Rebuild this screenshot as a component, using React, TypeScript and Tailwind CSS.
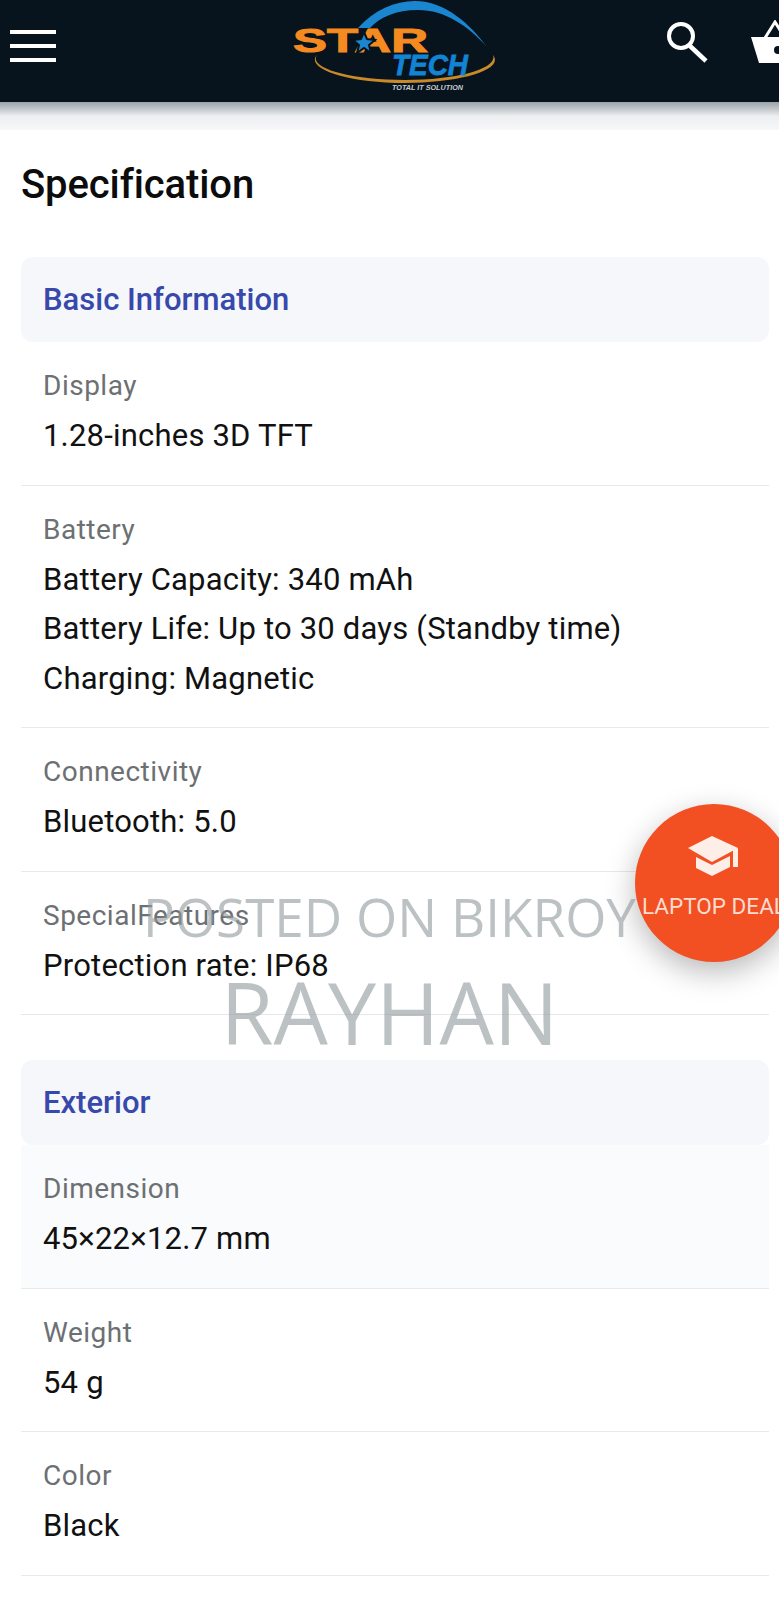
const sections = [
  {
    title: 'Basic Information',
    rows: [
      { label: 'Display', lines: ['1.28-inches 3D TFT'] },
      {
        label: 'Battery',
        lines: ['Battery Capacity: 340 mAh', 'Battery Life: Up to 30 days (Standby time)', 'Charging: Magnetic'],
      },
      { label: 'Connectivity', lines: ['Bluetooth: 5.0'] },
      { label: 'SpecialFeatures', lines: ['Protection rate: IP68'] },
    ],
  },
  {
    title: 'Exterior',
    rows: [
      { label: 'Dimension', lines: ['45×22×12.7 mm'], shaded: true },
      { label: 'Weight', lines: ['54 g'] },
      { label: 'Color', lines: ['Black'] },
    ],
  },
];

function Logo() {
  return (
    <svg width="210" height="102" viewBox="0 0 210 102" className="shrink-0">
      <path d="M68 28C84 10 105 1 125 1c30 0 55 23 72 46-19-21-42-37-69-37-22 0-38 7-48 18z" fill="#1a86d0" />
      <text
        x="3"
        y="52"
        fontFamily="Liberation Sans"
        fontSize="33"
        fontWeight="700"
        fill="#f48a20"
        stroke="#f48a20"
        strokeWidth="1"
        textLength="135"
        lengthAdjust="spacingAndGlyphs"
      >
        STAR
      </text>
      <polygon
        points="74,32 77,39 85,40 79,45 81,53 74,48 67,53 69,45 63,40 71,39"
        fill="#1a86d0"
        stroke="#07141e"
        strokeWidth="2"
      />
      <path d="M27 55C15 68 55 83 115 83c55 0 100-13 88-28 5 13-33 25-88 25C60 80 18 68 27 55z" fill="#c98a2a" />
      <text
        x="102"
        y="75"
        fontFamily="Liberation Sans"
        fontSize="30"
        fontWeight="700"
        fontStyle="italic"
        fill="#1284d4"
        stroke="#1284d4"
        strokeWidth="0.8"
        textLength="76"
        lengthAdjust="spacingAndGlyphs"
      >
        TECH
      </text>
      <text
        x="102"
        y="90"
        fontFamily="Liberation Sans"
        fontSize="7"
        fontWeight="700"
        fontStyle="italic"
        fill="#c8ccd0"
        textLength="71"
        lengthAdjust="spacingAndGlyphs"
      >
        TOTAL IT SOLUTION
      </text>
    </svg>
  );
}

function Header() {
  return (
    <header className="h-[102px] overflow-hidden bg-[#07141e]">
      <div className="flex h-full items-center pl-[10px]">
        <div className="flex w-[46px] shrink-0 flex-col gap-[10px] pb-[10px]">
          <span className="h-[4px] bg-white" />
          <span className="h-[4px] bg-white" />
          <span className="h-[4px] bg-white" />
        </div>
        <div className="ml-[234px] shrink-0">
          <Logo />
        </div>
        <svg width="42" height="42" viewBox="0 0 42 42" fill="none" stroke="white" className="mb-[16px] ml-[167px] shrink-0">
          <circle cx="14" cy="14" r="12" strokeWidth="4" />
          <path d="M23 24l16 15" strokeWidth="4.5" />
        </svg>
        <svg width="40" height="44" viewBox="0 0 40 44" className="mb-[18px] ml-[41px] shrink-0">
          <path d="M15 18L25 2l10 16" stroke="white" strokeWidth="3" fill="none" />
          <path d="M1 17h39v26H9z" fill="white" />
          <circle cx="28" cy="30" r="4" fill="#07141e" />
        </svg>
      </div>
    </header>
  );
}

function SpecRow({ label, lines, shaded }: { label: string; lines: string[]; shaded?: boolean }) {
  return (
    <div className={`border-b border-[#e6e8ea] px-[22px] pt-[19px] pb-[24px] ${shaded ? 'bg-[#fafbfd]' : ''}`}>
      <div className="text-[28px] leading-[50px] tracking-[0.5px] text-[#6d7073]">{label}</div>
      {lines.map((line) => (
        <div key={line} className="text-[31px] leading-[49.5px] tracking-[0.2px] text-[#111]">
          {line}
        </div>
      ))}
    </div>
  );
}

export default function App() {
  return (
    <div className="relative h-[1600px] w-[779px] overflow-hidden bg-white font-['Roboto',sans-serif]">
      <Header />
      <div className="h-[28px] bg-gradient-to-b from-[#9aa3a9] via-[#eceef0] to-[#f8f8f9]" />
      <main className="pr-[10px] pl-[21px]">
        <h1 className="pt-[25px] text-[40px] leading-[60px] font-medium tracking-[-0.1px] text-[#0c0c0c]">Specification</h1>
        {sections.map((section, i) => (
          <section key={section.title} className={i === 0 ? 'mt-[42px]' : 'mt-[45px]'}>
            <h2 className="rounded-[12px] bg-[#f5f7fb] px-[22px] text-[31px] leading-[85px] font-medium text-[#3749ab]">
              {section.title}
            </h2>
            {section.rows.map((row) => (
              <SpecRow key={row.label} {...row} />
            ))}
          </section>
        ))}
      </main>

      <div className="absolute top-[804px] left-[635px] flex h-[158px] w-[158px] flex-col items-center rounded-full bg-[#f24f23] pt-[32px] text-[#fbdccf] shadow-[0_10px_30px_rgba(0,0,0,0.28)]">
        <svg width="50" height="41" viewBox="0 0 50 41" fill="#fdeee8" className="-ml-[2px]">
          <path d="M0 12L24 0l26 12-26 14z" />
          <path d="M45 14l5-2v19h-5z" />
          <path d="M8 21l16 8 18-9v11l-18 9-16-8z" />
        </svg>
        <span className="mt-[16px] text-[22.5px] leading-[26px] whitespace-nowrap">LAPTOP DEAL</span>
      </div>

      <div className="pointer-events-none absolute top-[884px] left-0 w-full text-center font-['Open_Sans',sans-serif] text-[#8f979c]/60">
        <div className="text-[53px] leading-[66px]">POSTED ON BIKROY</div>
        <div className="text-[86px] leading-[124px]">RAYHAN</div>
      </div>
    </div>
  );
}
